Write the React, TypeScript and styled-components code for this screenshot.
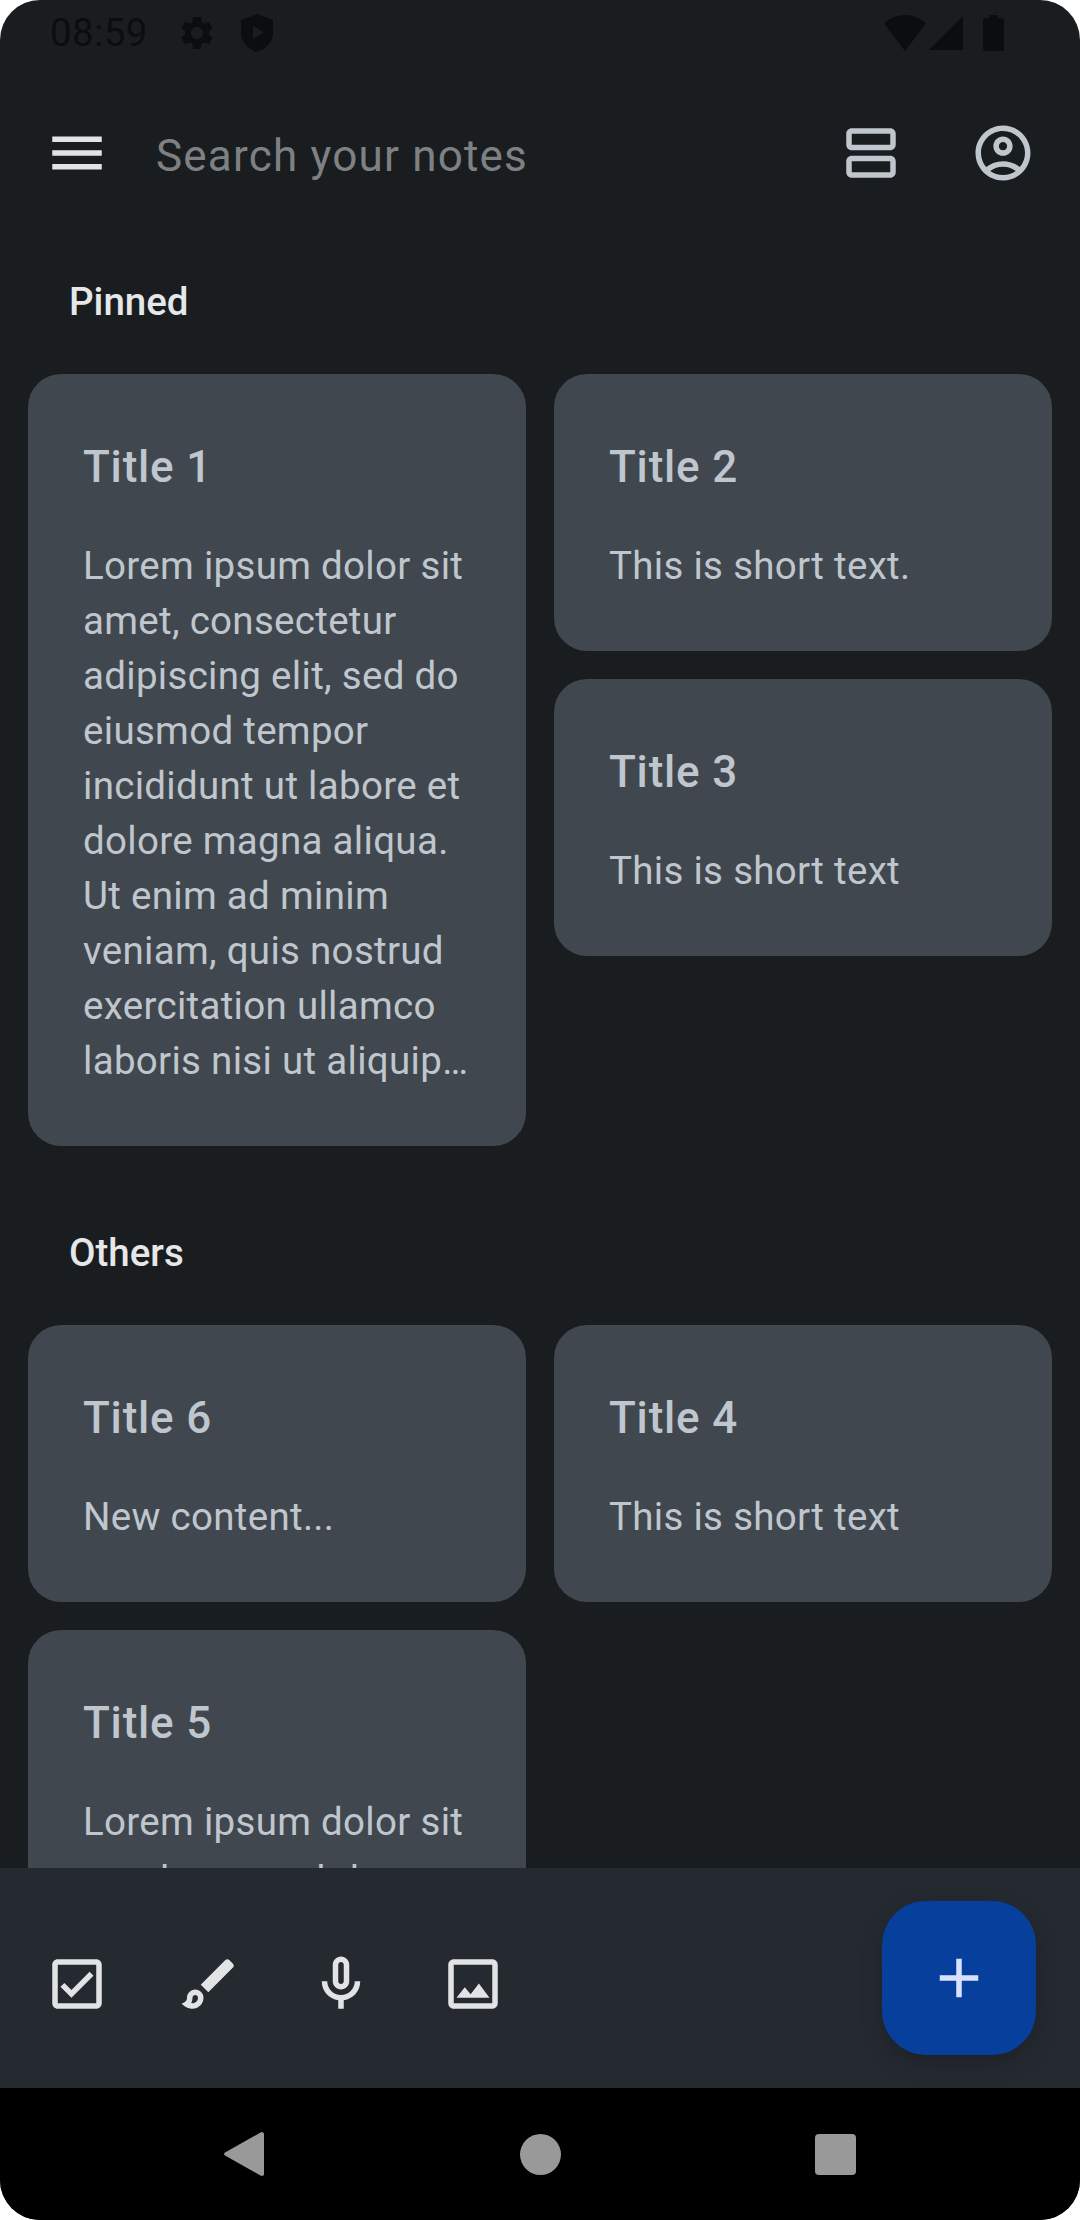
import styled, { createGlobalStyle } from "styled-components";

const GlobalStyle = createGlobalStyle`
  html, body {
    margin: 0;
    padding: 0;
    background: #fff;
  }
  * {
    box-sizing: border-box;
  }
`;

const Phone = styled.div`
  display: flex;
  flex-direction: column;
  width: 1080px;
  height: 2220px;
  overflow: hidden;
  border-radius: 40px;
  background: #1a1d20;
  font-family: Roboto, "Liberation Sans", sans-serif;
`;

const StatusBar = styled.div`
  display: flex;
  flex: none;
  align-items: center;
  justify-content: space-between;
  height: 66px;
  padding: 0 76px 0 50px;
  color: #0b0d0f;
`;

const StatusGroup = styled.div`
  display: flex;
  align-items: center;
`;

const Clock = styled.span`
  margin-right: 29px;
  font-size: 38.5px;
  line-height: 66px;
  letter-spacing: 0.4px;
`;

const StatusIcon = styled.svg`
  display: block;
  flex: none;
  fill: currentColor;
`;

const ShieldIcon = styled(StatusIcon)`
  margin-left: 24px;
`;

const SignalIcon = styled(StatusIcon)`
  margin-left: 3px;
`;

const BatteryIcon = styled(StatusIcon)`
  margin-left: 20px;
`;

const BackIcon = styled(StatusIcon)`
  color: #999;
`;

const Toolbar = styled.div`
  display: flex;
  flex: none;
  align-items: center;
  height: 66px;
  margin-top: 54px;
  padding: 0 44px;
`;

const SearchHint = styled.span`
  flex: 1;
  margin: 5px 0 0 46px;
  color: #7e8184;
  font-size: 44px;
  line-height: 66px;
  letter-spacing: 1.2px;
`;

const Icon = styled.svg<{ $color?: string }>`
  display: block;
  flex: none;
  width: 66px;
  height: 66px;
  fill: ${(p) => p.$color || "#e2e3e5"};
`;

const ToolbarActions = styled.div`
  display: flex;
  gap: 66px;
`;

const Notes = styled.div`
  flex: 1;
  min-height: 0;
  overflow: hidden;
  padding: 94px 28px 0;
`;

const SectionLabel = styled.h2`
  margin: 0 0 50px;
  padding-left: 41px;
  color: #e6e7e9;
  font-size: 38.5px;
  font-weight: 500;
  line-height: 44px;
`;

const NoteColumns = styled.div`
  display: grid;
  grid-template-columns: 498px 498px;
  gap: 28px;
  align-items: start;
  margin-bottom: 85px;
`;

const NoteColumn = styled.div`
  display: flex;
  flex-direction: column;
  gap: 28px;
`;

const NoteCard = styled.div`
  padding: 66px 40px 58px 55px;
  border-radius: 33px;
  background: #41474e;
  color: #bfc6cd;
`;

const NoteTitle = styled.h3`
  margin: 0 0 43px;
  font-size: 44px;
  font-weight: 500;
  line-height: 55px;
  letter-spacing: 0.8px;
`;

const NoteBody = styled.p`
  margin: 0;
  font-size: 38.5px;
  line-height: 55px;
  letter-spacing: 0.3px;
`;

const BottomBar = styled.div`
  display: flex;
  flex: none;
  align-items: center;
  justify-content: space-between;
  height: 220px;
  padding: 0 44px;
  background: #252a31;
`;

const BarActions = styled.div`
  display: flex;
  gap: 66px;
  margin-top: 12px;
`;

const Fab = styled.button`
  display: flex;
  align-items: center;
  justify-content: center;
  width: 154px;
  height: 154px;
  padding: 0;
  border: none;
  border-radius: 44px;
  background: #07409c;
  box-shadow: 0 8px 22px rgba(0, 0, 0, 0.22);
`;

const NavBar = styled.div`
  display: flex;
  flex: none;
  align-items: center;
  justify-content: center;
  height: 132px;
  background: #000;
`;

const NavSlot = styled.div`
  display: flex;
  align-items: center;
  justify-content: center;
  width: 296px;
`;

const NavCircle = styled.div`
  width: 41px;
  height: 41px;
  border-radius: 50%;
  background: #999;
`;

const NavSquare = styled.div`
  width: 41px;
  height: 41px;
  margin-right: 2px;
  border-radius: 4px;
  background: #999;
`;

const lorem =
  "Lorem ipsum dolor sit amet, consectetur adipiscing elit, sed do eiusmod tempor incididunt ut labore et dolore magna aliqua. Ut enim ad minim veniam, quis nostrud exercitation ullamco laboris nisi ut aliquip…";

function Note({ title, body }: { title: string; body: string }) {
  return (
    <NoteCard>
      <NoteTitle>{title}</NoteTitle>
      <NoteBody>{body}</NoteBody>
    </NoteCard>
  );
}

export default function App() {
  return (
    <Phone>
      <GlobalStyle />
      <StatusBar>
        <StatusGroup>
          <Clock>08:59</Clock>
          <StatusIcon viewBox="0 0 24 24" width="40" height="40">
            <path d="M19.14 12.94c.04-.3.06-.61.06-.94 0-.32-.02-.64-.07-.94l2.03-1.58c.18-.14.23-.41.12-.61l-1.92-3.32c-.12-.22-.37-.29-.59-.22l-2.39.96c-.5-.38-1.03-.7-1.62-.94l-.36-2.54c-.04-.24-.24-.41-.48-.41h-3.84c-.24 0-.43.17-.47.41l-.36 2.54c-.59.24-1.13.57-1.62.94l-2.39-.96c-.22-.08-.47 0-.59.22L2.74 8.87c-.12.21-.08.47.12.61l2.03 1.58c-.05.3-.09.63-.09.94s.02.64.07.94l-2.03 1.58c-.18.14-.23.41-.12.61l1.92 3.32c.12.22.37.29.59.22l2.39-.96c.5.38 1.03.7 1.62.94l.36 2.54c.05.24.24.41.48.41h3.84c.24 0 .44-.17.47-.41l.36-2.54c.59-.24 1.13-.56 1.62-.94l2.39.96c.22.08.47 0 .59-.22l1.92-3.32c.12-.22.07-.47-.12-.61l-2.01-1.58zM12 15.6c-1.98 0-3.6-1.62-3.6-3.6s1.62-3.6 3.6-3.6 3.6 1.62 3.6 3.6-1.62 3.6-3.6 3.6z" />
          </StatusIcon>
          <ShieldIcon viewBox="0 0 32 38" width="32" height="38">
            <path
              fillRule="evenodd"
              d="M16 0 32 6v13c0 9-7 16-16 19C7 35 0 28 0 19V6zM12 12v13l11-6.500z"
            />
          </ShieldIcon>
        </StatusGroup>
        <StatusGroup>
          <StatusIcon viewBox="0 0 42 36" width="42" height="36">
            <path d="M21 0c8 0 15 3 21 8.500L21 36 0 8.500C6 3 13 0 21 0z" />
          </StatusIcon>
          <SignalIcon viewBox="0 0 34 34" width="34" height="34">
            <path d="M34 0v34H0z" />
          </SignalIcon>
          <BatteryIcon viewBox="0 0 21 36" width="21" height="36">
            <path d="M6 0h9v3h4c1 0 2 1 2 2v29c0 1-1 2-2 2H2c-1 0-2-1-2-2V5c0-1 1-2 2-2h4z" />
          </BatteryIcon>
        </StatusGroup>
      </StatusBar>

      <Toolbar>
        <Icon viewBox="0 0 24 24">
          <path d="M3 18h18v-2H3v2zm0-5h18v-2H3v2zm0-7v2h18V6H3z" />
        </Icon>
        <SearchHint>Search your notes</SearchHint>
        <ToolbarActions>
          <Icon viewBox="0 0 24 24" $color="#bfc6cd">
            <path d="M19 13H5c-1.100 0-2 .9-2 2v4c0 1.100.9 2 2 2h14c1.100 0 2-.9 2-2v-4c0-1.100-.9-2-2-2zm0 6H5v-4h14v4zM19 3H5c-1.100 0-2 .9-2 2v4c0 1.100.9 2 2 2h14c1.100 0 2-.9 2-2V5c0-1.100-.9-2-2-2zm0 6H5V5h14v4z" />
          </Icon>
          <Icon viewBox="0 0 24 24" $color="#bfc6cd">
            <path d="M12 2C6.480 2 2 6.480 2 12s4.480 10 10 10 10-4.480 10-10S17.520 2 12 2zM7.350 18.500C8.660 17.560 10.260 17 12 17s3.340.56 4.650 1.500C15.340 19.440 13.740 20 12 20s-3.340-.56-4.650-1.500zm10.790-1.380C16.450 15.800 14.320 15 12 15s-4.450.8-6.140 2.120C4.700 15.730 4 13.950 4 12c0-4.420 3.580-8 8-8s8 3.580 8 8c0 1.950-.7 3.730-1.860 5.120z" />
            <path d="M12 6c-1.930 0-3.500 1.570-3.500 3.500S10.070 13 12 13s3.500-1.570 3.500-3.500S13.930 6 12 6zm0 5c-.83 0-1.500-.67-1.500-1.500S11.170 8 12 8s1.500.67 1.500 1.500S12.830 11 12 11z" />
          </Icon>
        </ToolbarActions>
      </Toolbar>

      <Notes>
        <SectionLabel>Pinned</SectionLabel>
        <NoteColumns>
          <NoteColumn>
            <Note title="Title 1" body={lorem} />
          </NoteColumn>
          <NoteColumn>
            <Note title="Title 2" body="This is short text." />
            <Note title="Title 3" body="This is short text" />
          </NoteColumn>
        </NoteColumns>
        <SectionLabel>Others</SectionLabel>
        <NoteColumns>
          <NoteColumn>
            <Note title="Title 6" body="New content..." />
            <Note title="Title 5" body={lorem} />
          </NoteColumn>
          <NoteColumn>
            <Note title="Title 4" body="This is short text" />
          </NoteColumn>
        </NoteColumns>
      </Notes>

      <BottomBar>
        <BarActions>
          <Icon viewBox="0 0 24 24">
            <path d="M19 3H5c-1.100 0-2 .9-2 2v14c0 1.100.9 2 2 2h14c1.100 0 2-.9 2-2V5c0-1.100-.9-2-2-2zm0 16H5V5h14v14z" />
            <path d="M17.990 9l-1.410-1.420-6.590 6.590-2.580-2.570-1.420 1.410 4 3.990z" />
          </Icon>
          <Icon viewBox="0 0 24 24">
            <path
              fillRule="evenodd"
              d="M7 14c-1.660 0-3 1.340-3 3 0 1.310-1.160 2-2 2 .92 1.220 2.490 2 4 2 2.210 0 4-1.790 4-4 0-1.660-1.340-3-3-3zm0 2c.55 0 1 .45 1 1 0 1.100-.9 2-2 2-.17 0-.33-.02-.5-.05.31-.55.5-1.210.5-1.950 0-.55.45-1 1-1z"
            />
            <path d="M20.710 4.630l-1.340-1.340c-.39-.39-1.020-.39-1.410 0L9 12.250 11.750 15l8.960-8.960c.39-.39.39-1.020 0-1.410z" />
          </Icon>
          <Icon viewBox="0 0 24 24">
            <path d="M12 14c1.660 0 3-1.340 3-3V5c0-1.660-1.340-3-3-3S9 3.340 9 5v6c0 1.660 1.340 3 3 3zm-1-9c0-.55.45-1 1-1s1 .45 1 1v6c0 .55-.45 1-1 1s-1-.45-1-1V5z" />
            <path d="M17 11c0 2.760-2.240 5-5 5s-5-2.240-5-5H5c0 3.530 2.610 6.430 6 6.920V21h2v-3.080c3.390-.49 6-3.390 6-6.920h-2z" />
          </Icon>
          <Icon viewBox="0 0 24 24">
            <path d="M19 5v14H5V5h14m0-2H5c-1.100 0-2 .9-2 2v14c0 1.100.9 2 2 2h14c1.100 0 2-.9 2-2V5c0-1.100-.9-2-2-2zm-4.860 8.860l-3 3.870L9 13.140 6 17h12l-3.860-5.140z" />
          </Icon>
        </BarActions>
        <Fab aria-label="New note">
          <Icon viewBox="0 0 24 24" $color="#d8e2ff">
            <path d="M19 13h-6v6h-2v-6H5v-2h6V5h2v6h6v2z" />
          </Icon>
        </Fab>
      </BottomBar>

      <NavBar>
        <NavSlot>
          <BackIcon viewBox="0 0 40 46" width="40" height="46">
            <path d="M38 1c1 0 2 1 2 2v40c0 1-1 2-2 2-.5 0-1-.2-1.500-.5L1 24.500c-1.300-.8-1.300-2.200 0-3L36.500 1.500C37 1.200 37.500 1 38 1z" />
          </BackIcon>
        </NavSlot>
        <NavSlot>
          <NavCircle />
        </NavSlot>
        <NavSlot>
          <NavSquare />
        </NavSlot>
      </NavBar>
    </Phone>
  );
}
